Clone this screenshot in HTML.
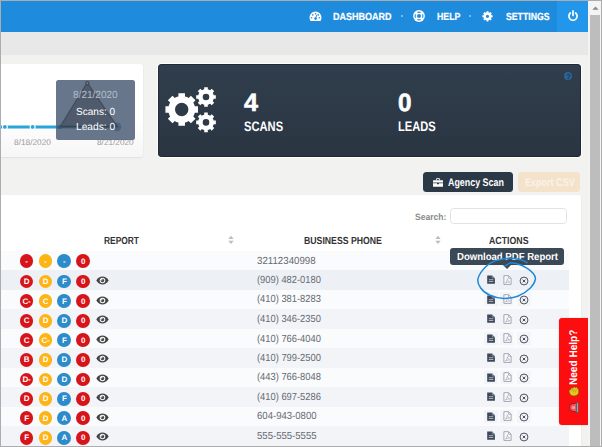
<!DOCTYPE html>
<html lang="en"><head><meta charset="utf-8"><title>Dashboard</title>
<style>
*{box-sizing:border-box}
html,body{margin:0;padding:0}
body{width:602px;height:447px;overflow:hidden;position:relative;background:#f2f2f1;font-family:"Liberation Sans", Arial, sans-serif;text-rendering:geometricPrecision}
.t{position:absolute;white-space:nowrap;line-height:1;transform-origin:0 50%;display:block}
.ic{position:absolute;overflow:visible}
.band{position:absolute;left:0;top:31px;width:590px;height:24px;background:#e8e8e8}
.nav{position:absolute;left:0;top:0;width:588px;height:31.8px;background:#1e8bdd}
.pwr{position:absolute;left:557px;top:0;width:31px;height:31.8px;background:#2296ea}
.dot{position:absolute;width:2.4px;height:2.4px;border-radius:50%;background:#8ecdf6}
.card{position:absolute;background:#fff;border-radius:3px;box-shadow:0 1px 2px rgba(0,0,0,0.08)}
.chart{position:absolute;left:-4px;top:63px;width:146.5px;height:94px}
.cbg{left:0;top:0.9px;width:146.5px;height:93px;margin-left:0 !important;background:linear-gradient(#fff 60%,#f6f6f6)}
.chart>*{margin-left:4px}
.tip1{position:absolute;left:56px;top:17px;width:79px;height:60px;border-radius:2.5px;background:rgba(74,92,116,0.84)}
.stats{position:absolute;left:158px;top:63px;width:423px;height:94px}
.sbg{position:absolute;left:0.2px;top:0.9px;width:422.8px;height:93px;border-radius:4px;background:linear-gradient(#303e4d,#2a3541);box-shadow:0 0 0 1px rgba(255,255,255,0.85), inset 0 0 0 1px rgba(25,33,42,0.6)}
.q{position:absolute;width:8.2px;height:8.2px;border-radius:50%;background:#2a649a}
.btn{position:absolute;border-radius:3.5px}
.btn.dark{background:#2b3947}
.btn.pale{background:#f5e2ca}
.tablecard{left:1px;top:195px;width:579.7px;height:260px;border-radius:0 3px 0 0}
.search{position:absolute;border:1px solid #e3e3e3;border-radius:3.5px;background:#fff}
.r{position:absolute;left:0;width:568px;height:19.6px}
.r.odd{background:#fafbfc}
.r.even{background:#f2f4f8}
.r.hov{background:#edf1f6}
.g{position:absolute;width:13.8px;height:13.8px;border-radius:50%;color:#fff;font-size:8px;line-height:1;text-align:center;font-weight:700;letter-spacing:-0.3px}
.gl{position:absolute;left:0;width:100%;display:block;line-height:1}
.ab{position:absolute;width:13.5px;height:13.8px;background:#f3f5f9}
.tip2{position:absolute;left:450px;top:248px;width:114px;height:17.2px;border-radius:3px;background:#3b4856}
.arr{position:absolute;left:53px;top:17.2px;width:0;height:0;border-left:4px solid transparent;border-right:4px solid transparent;border-top:4px solid #3b4856}
.help{position:absolute;left:558.5px;top:317.8px;width:29.5px;height:107px;background:#fb0d10;border-radius:3px 0 0 3px;box-shadow:0 0 2px rgba(0,0,0,0.2)}
.helptxt{position:absolute;left:10.1px;top:67.2px;white-space:nowrap;color:#fff;font-weight:700;font-size:11px;line-height:1;transform-origin:0 0;transform:rotate(-90deg) scaleX(0.915)}
.sb{position:absolute;left:588px;top:0;width:14px;height:447px;background:#f4f4f4}
.thumb{position:absolute;left:2.2px;top:14.8px;width:9.8px;height:440px;background:#bdbdbd}
.frame{position:absolute;left:0;top:0;width:602px;height:447px;border:1px solid #adadad;border-left-width:1.5px;border-right-width:1.5px;pointer-events:none}
</style></head>
<body>
<div class="band"></div>
<nav class="nav">
<div class="pwr"></div>
<svg class="ic" style="left:308.5px;top:11px;width:13px;height:11px" viewBox="0 0 13 11">
<path d="M6.5,0.6 A6,6 0 0 1 12.5,6.6 C12.5,7.9 12.1,9.0 11.5,9.9 L1.5,9.9 C0.9,9.0 0.5,7.9 0.5,6.6 A6,6 0 0 1 6.5,0.6Z" fill="#fff"/>
<g fill="#1e8bdd"><circle cx="2.6" cy="6.7" r="0.8"/><circle cx="3.8" cy="3.9" r="0.8"/><circle cx="6.5" cy="2.8" r="0.8"/><circle cx="9.2" cy="3.9" r="0.8"/><circle cx="10.4" cy="6.7" r="0.8"/><circle cx="6.5" cy="7.6" r="1.3"/><path d="M6.1,7.2 L7.6,3.6 L8.3,3.9 L7.0,7.6Z"/></g>
</svg>
<span class="t" id="t0" style="left:332.90px;top:13.00px;font-size:10.25px;font-weight:700;color:#fff;transform:scaleX(0.8780);-webkit-text-stroke:0.2px #fff;">DASHBOARD</span>
<i class="dot" style="left:400.5px;top:15px"></i>
<svg class="ic" style="left:412px;top:8.75px;width:14px;height:14px" viewBox="-7 -7 14 14">
<circle r="5.9" fill="#fff"/><circle r="2" fill="#1e8bdd"/>
<g fill="none" stroke="#1e8bdd" stroke-width="1.1"><path d="M3.53,-1.66 A3.9,3.9 0 0 1 3.53,1.66"/><path d="M-3.53,-1.66 A3.9,3.9 0 0 0 -3.53,1.66"/><path d="M-1.66,-3.53 A3.9,3.9 0 0 1 1.66,-3.53"/><path d="M-1.66,3.53 A3.9,3.9 0 0 0 1.66,3.53"/></g>
</svg>
<span class="t" id="t1" style="left:437.00px;top:13.00px;font-size:10.25px;font-weight:700;color:#fff;transform:scaleX(0.8521);-webkit-text-stroke:0.2px #fff;">HELP</span>
<i class="dot" style="left:469px;top:15px"></i>
<svg class="ic" style="left:481px;top:10px;width:13px;height:13px" viewBox="-6.5 -6.5 13 13"><path fill="#fff" fill-rule="evenodd" d="M3.99,-1.16 L5.11,-1.17 L5.11,0.77 L3.99,0.76 L3.86,1.17 L3.70,1.57 L3.50,1.94 L4.30,2.72 L2.92,4.10 L2.14,3.30 L1.77,3.50 L1.37,3.66 L0.96,3.79 L0.97,4.91 L-0.97,4.91 L-0.96,3.79 L-1.37,3.66 L-1.77,3.50 L-2.14,3.30 L-2.92,4.10 L-4.30,2.72 L-3.50,1.94 L-3.70,1.57 L-3.86,1.17 L-3.99,0.76 L-5.11,0.77 L-5.11,-1.17 L-3.99,-1.16 L-3.86,-1.57 L-3.70,-1.97 L-3.50,-2.34 L-4.30,-3.12 L-2.92,-4.50 L-2.14,-3.70 L-1.77,-3.90 L-1.37,-4.06 L-0.96,-4.19 L-0.97,-5.31 L0.97,-5.31 L0.96,-4.19 L1.37,-4.06 L1.77,-3.90 L2.14,-3.70 L2.92,-4.50 L4.30,-3.12 L3.50,-2.34 L3.70,-1.97 L3.86,-1.57Z M-1.60,-0.20 a1.60,1.60 0 1,0 3.20,0 a1.60,1.60 0 1,0 -3.20,0Z"/></svg>
<span class="t" id="t2" style="left:505.50px;top:13.00px;font-size:10.25px;font-weight:700;color:#fff;transform:scaleX(0.8485);-webkit-text-stroke:0.2px #fff;">SETTINGS</span>
<svg class="ic" style="left:566px;top:9px;width:14px;height:14px" viewBox="-7 -7 14 14">
<path d="M-2.6,-3.0 A4.1,4.1 0 1 0 2.6,-3.0" fill="none" stroke="#fff" stroke-width="1.7" stroke-linecap="round"/>
<path d="M0,-5.2 L0,-0.6" stroke="#fff" stroke-width="1.7" stroke-linecap="round"/>
</svg>
</nav>
<section class="chart"><div class="card cbg"></div>
<svg class="ic" style="left:0;top:0;width:143px;height:94px" viewBox="0 0 143 94">
<path d="M0,63.9 L60,63.9" stroke="#2aa5d8" stroke-width="3" fill="none"/>
<path d="M60,63.9 L117,63.9" stroke="#2a80b2" stroke-width="3" fill="none"/>
<g fill="#fff"><circle cx="4.9" cy="63.9" r="3"/><circle cx="32.6" cy="63.9" r="3"/></g>
<g fill="#2aa5d8"><circle cx="4.9" cy="63.9" r="1.9"/><circle cx="32.6" cy="63.9" r="1.9"/></g>
<circle cx="117" cy="63.9" r="4.3" fill="#3f86b8"/>
</svg>
<span class="t" id="t3" style="left:14.00px;top:76.00px;font-size:8.25px;font-weight:400;color:#999;transform:scaleX(1.0081);">8/18/2020</span>
<span class="t" id="t4" style="left:97.00px;top:76.00px;font-size:8.25px;font-weight:400;color:#999;">8/21/2020</span>
<div class="tip1"></div>
<svg class="ic" style="left:0;top:0;width:143px;height:94px" viewBox="0 0 143 94">
<path d="M60,63.9 L86.3,21 Q87.3,19.5 88.3,21 L117.5,63.9Z" fill="rgba(45,52,66,0.4)" stroke="rgba(45,52,66,0.55)" stroke-width="1.2"/>
<circle cx="87.3" cy="20.2" r="1.7" fill="#6a788b" stroke="rgba(40,48,60,0.8)" stroke-width="0.9"/>
<circle cx="60" cy="63.9" r="2" fill="rgba(45,85,120,0.9)"/>
</svg>
<span class="t" id="t5" style="left:72.80px;top:28.00px;font-size:10.25px;font-weight:400;color:#b2bdc8;transform:scaleX(0.9801);">8/21/2020</span>
<span class="t" id="t6" style="left:75.90px;top:45.00px;font-size:10.25px;font-weight:400;color:#fff;transform:scaleX(0.9802);">Scans: 0</span>
<span class="t" id="t7" style="left:75.90px;top:60.00px;font-size:10.25px;font-weight:400;color:#fff;transform:scaleX(0.9942);">Leads: 0</span>
</section>
<section class="stats"><div class="sbg"></div>
<svg class="ic" style="left:0;top:0;width:80px;height:94px" viewBox="0 0 80 94"><path fill="#fff" fill-rule="evenodd" d="M36.80,43.25 L39.97,43.21 L39.97,49.79 L36.80,49.75 L36.41,51.04 L35.90,52.28 L35.27,53.46 L37.53,55.68 L32.88,60.33 L30.66,58.07 L29.48,58.70 L28.24,59.21 L26.95,59.60 L26.99,62.77 L20.41,62.77 L20.45,59.60 L19.16,59.21 L17.92,58.70 L16.74,58.07 L14.52,60.33 L9.87,55.68 L12.13,53.46 L11.50,52.28 L10.99,51.04 L10.60,49.75 L7.43,49.79 L7.43,43.21 L10.60,43.25 L10.99,41.96 L11.50,40.72 L12.13,39.54 L9.87,37.32 L14.52,32.67 L16.74,34.93 L17.92,34.30 L19.16,33.79 L20.45,33.40 L20.41,30.23 L26.99,30.23 L26.95,33.40 L28.24,33.79 L29.48,34.30 L30.66,34.93 L32.88,32.67 L37.53,37.32 L35.27,39.54 L35.90,40.72 L36.41,41.96Z M17.00,46.50 a6.70,6.70 0 1,0 13.40,0 a6.70,6.70 0 1,0 -13.40,0Z M55.70,32.22 L57.83,32.19 L57.83,35.81 L55.70,35.78 L55.45,36.62 L55.12,37.42 L54.70,38.18 L56.24,39.67 L53.67,42.24 L52.18,40.70 L51.42,41.12 L50.62,41.45 L49.78,41.70 L49.81,43.83 L46.19,43.83 L46.22,41.70 L45.38,41.45 L44.58,41.12 L43.82,40.70 L42.33,42.24 L39.76,39.67 L41.30,38.18 L40.88,37.42 L40.55,36.62 L40.30,35.78 L38.17,35.81 L38.17,32.19 L40.30,32.22 L40.55,31.38 L40.88,30.58 L41.30,29.82 L39.76,28.33 L42.33,25.76 L43.82,27.30 L44.58,26.88 L45.38,26.55 L46.22,26.30 L46.19,24.17 L49.81,24.17 L49.78,26.30 L50.62,26.55 L51.42,26.88 L52.18,27.30 L53.67,25.76 L56.24,28.33 L54.70,29.82 L55.12,30.58 L55.45,31.38Z M44.70,34.00 a3.30,3.30 0 1,0 6.60,0 a3.30,3.30 0 1,0 -6.60,0Z M55.70,57.62 L57.83,57.59 L57.83,61.21 L55.70,61.18 L55.45,62.02 L55.12,62.82 L54.70,63.58 L56.24,65.07 L53.67,67.64 L52.18,66.10 L51.42,66.52 L50.62,66.85 L49.78,67.10 L49.81,69.23 L46.19,69.23 L46.22,67.10 L45.38,66.85 L44.58,66.52 L43.82,66.10 L42.33,67.64 L39.76,65.07 L41.30,63.58 L40.88,62.82 L40.55,62.02 L40.30,61.18 L38.17,61.21 L38.17,57.59 L40.30,57.62 L40.55,56.78 L40.88,55.98 L41.30,55.22 L39.76,53.73 L42.33,51.16 L43.82,52.70 L44.58,52.28 L45.38,51.95 L46.22,51.70 L46.19,49.57 L49.81,49.57 L49.78,51.70 L50.62,51.95 L51.42,52.28 L52.18,52.70 L53.67,51.16 L56.24,53.73 L54.70,55.22 L55.12,55.98 L55.45,56.78Z M44.70,59.40 a3.30,3.30 0 1,0 6.60,0 a3.30,3.30 0 1,0 -6.60,0Z"/></svg>
<span class="t" id="t8" style="left:85.70px;top:28.00px;font-size:25.00px;font-weight:700;color:#fff;transform:scaleX(1.0067);-webkit-text-stroke:0.6px #fff;">4</span>
<span class="t" id="t9" style="left:85.70px;top:57.00px;font-size:13.75px;font-weight:700;color:#fff;transform:scaleX(0.8122);">SCANS</span>
<span class="t" id="t10" style="left:239.50px;top:28.00px;font-size:25.00px;font-weight:700;color:#fff;transform:scaleX(0.9708);-webkit-text-stroke:0.6px #fff;">0</span>
<span class="t" id="t11" style="left:239.50px;top:57.00px;font-size:13.75px;font-weight:700;color:#fff;transform:scaleX(0.8110);">LEADS</span>
<span class="q" style="left:405.8px;top:8.8px"></span>
<span class="t" id="t12" style="left:408.30px;top:10.00px;font-size:7.50px;font-weight:700;color:#2a3541;">?</span>
</section>
<div class="btn dark" style="left:422.8px;top:171.5px;width:90.5px;height:20.8px">
<svg class="ic" style="left:10px;top:6px;width:10px;height:9px" viewBox="0 0 10 9">
<path d="M0.4,2.2 h9.2 a0.4,0.4 0 0 1 0.4,0.4 v2.0 h-10 v-2.0 a0.4,0.4 0 0 1 0.4,-0.4Z M0,5.3 h4 v0.9 h2 v-0.9 h4 v2.9 a0.5,0.5 0 0 1 -0.5,0.5 h-9 a0.5,0.5 0 0 1 -0.5,-0.5Z" fill="#fff"/>
<path d="M3.4,2.2 v-1.2 a0.4,0.4 0 0 1 0.4,-0.4 h2.4 a0.4,0.4 0 0 1 0.4,0.4 v1.2" fill="none" stroke="#fff" stroke-width="0.9"/>
</svg>
<span class="t" id="t13" style="left:25.00px;top:6.50px;font-size:11.00px;font-weight:700;color:#fff;transform:scaleX(0.8090);">Agency Scan</span>
</div>
<div class="btn pale" style="left:517.6px;top:171.5px;width:62.7px;height:20.8px">
<span class="t" id="t14" style="left:7.00px;top:6.50px;font-size:11.00px;font-weight:700;color:#f9f2ea;transform:scaleX(0.8213);">Export CSV</span>
</div>
<section class="card tablecard">
<span class="t" id="t15" style="left:413.80px;top:18.00px;font-size:9.25px;font-weight:700;color:#8a8a8a;transform:scaleX(0.9223);">Search:</span>
<div class="search" style="left:449.4px;top:12.5px;width:116.6px;height:16.9px"></div>
<span class="t" id="t16" style="left:103.00px;top:42.00px;font-size:10.25px;font-weight:700;color:#333;transform:scaleX(0.8193);">REPORT</span>
<span class="t" id="t17" style="left:303.40px;top:42.00px;font-size:10.25px;font-weight:700;color:#333;transform:scaleX(0.8495);">BUSINESS PHONE</span>
<span class="t" id="t18" style="left:488.00px;top:42.00px;font-size:10.25px;font-weight:700;color:#333;transform:scaleX(0.8564);">ACTIONS</span>
<svg class="ic" style="left:226.5px;top:40.0px;width:6px;height:10px" viewBox="0 0 6 10"><path d="M0.3,4.1 L3,0.8 L5.7,4.1Z M0.3,5.7 L3,9 L5.7,5.7Z" fill="#bdbdbd"/></svg>
<svg class="ic" style="left:433.8px;top:40.0px;width:6px;height:10px" viewBox="0 0 6 10"><path d="M0.3,4.1 L3,0.8 L5.7,4.1Z M0.3,5.7 L3,9 L5.7,5.7Z" fill="#bdbdbd"/></svg>
<div class="r odd" style="top:55.70px"></div>
<b class="g" style="left:18.60px;top:59.30px;background:#d7141a"><span class="gl" style="top:3.70px">-</span></b>
<b class="g" style="left:37.50px;top:59.30px;background:#fdb414"><span class="gl" style="top:3.70px">-</span></b>
<b class="g" style="left:56.30px;top:59.30px;background:#2b8bcb"><span class="gl" style="top:3.70px">-</span></b>
<b class="g" style="left:75.10px;top:59.30px;background:#d7141a"><span class="gl" style="top:3.70px">0</span></b>
<span class="t" id="t19" style="left:256.40px;top:62.00px;font-size:10.25px;font-weight:400;color:#666a72;transform:scaleX(0.9459);">32112340998</span>
<i class="ab" style="left:483.1px;top:57.5px"></i>
<i class="ab" style="left:498.9px;top:57.5px"></i>
<i class="ab" style="left:516.0px;top:57.5px"></i>
<svg class="ic" style="left:486.0px;top:59.7px;width:8px;height:9px" viewBox="0 0 8 9"><path d="M0.2,0.4 H5 L7.9,3.3 V8.7 H0.2Z" fill="#3d4858"/><path d="M5.3,0.2 V3 H8" stroke="#aab2bc" stroke-width="0.6" fill="none"/><path d="M1.8,4.7 H6.3 M1.8,6.5 H6.3" stroke="#c5ccd5" stroke-width="0.8"/></svg>
<svg class="ic" style="left:501.7px;top:59.2px;width:9px;height:10px" viewBox="0 0 9 10"><path d="M0.9,0.7 H5.6 L8.1,3.2 V9.4 H0.9Z" fill="#fbfbfd" stroke="#959eaa" stroke-width="0.9"/><path d="M5.5,0.9 V3.3 H8" stroke="#959eaa" stroke-width="0.7" fill="none"/><path d="M2.4,8 C3.6,6.9 4.3,5.3 4.3,3.7 C4.5,5.5 5.4,6.7 6.8,7 C5.2,6.9 3.6,7.3 2.4,8Z" fill="none" stroke="#a9a2b0" stroke-width="0.65"/></svg>
<svg class="ic" style="left:518.3px;top:60.2px;width:10px;height:10px" viewBox="-5 -5 10 10"><circle r="3.95" fill="none" stroke="#3e3e4c" stroke-width="0.9"/><path d="M-1.35,-1.35 L1.35,1.35 M-1.35,1.35 L1.35,-1.35" stroke="#3e3e4c" stroke-width="0.9"/></svg>
<div class="r hov" style="top:75.23px"></div>
<b class="g" style="left:18.60px;top:79.60px;background:#d7141a"><span class="gl" style="top:3.40px">D</span></b>
<b class="g" style="left:37.50px;top:79.60px;background:#fdb414"><span class="gl" style="top:3.40px">D</span></b>
<b class="g" style="left:56.30px;top:79.60px;background:#2b8bcb"><span class="gl" style="top:3.40px">F</span></b>
<b class="g" style="left:75.10px;top:79.60px;background:#d7141a"><span class="gl" style="top:3.40px">0</span></b>
<svg class="ic" style="left:94.8px;top:81.1px;width:13px;height:9px" viewBox="0 0 13 9"><path d="M0.3,4.5 C2,1.7 4,0.6 6.5,0.6 C9,0.6 11,1.7 12.7,4.5 C11,7.3 9,8.4 6.5,8.4 C4,8.4 2,7.3 0.3,4.5Z M6.5,1.7 A2.8,2.8 0 1 0 6.5,7.3 A2.8,2.8 0 1 0 6.5,1.7Z" fill="#444" fill-rule="evenodd"/><circle cx="6.5" cy="4.5" r="1.7" fill="#444"/><circle cx="5.8" cy="3.8" r="0.7" fill="#fff"/></svg>
<span class="t" id="t20" style="left:256.40px;top:81.00px;font-size:10.25px;font-weight:400;color:#666a72;transform:scaleX(0.9116);">(909) 482-0180</span>
<svg class="ic" style="left:486.0px;top:80.0px;width:8px;height:9px" viewBox="0 0 8 9"><path d="M0.2,0.4 H5 L7.9,3.3 V8.7 H0.2Z" fill="#3d4858"/><path d="M5.3,0.2 V3 H8" stroke="#aab2bc" stroke-width="0.6" fill="none"/><path d="M1.8,4.7 H6.3 M1.8,6.5 H6.3" stroke="#c5ccd5" stroke-width="0.8"/></svg>
<svg class="ic" style="left:501.7px;top:79.5px;width:9px;height:10px" viewBox="0 0 9 10"><path d="M0.9,0.7 H5.6 L8.1,3.2 V9.4 H0.9Z" fill="#fbfbfd" stroke="#959eaa" stroke-width="0.9"/><path d="M5.5,0.9 V3.3 H8" stroke="#959eaa" stroke-width="0.7" fill="none"/><path d="M2.4,8 C3.6,6.9 4.3,5.3 4.3,3.7 C4.5,5.5 5.4,6.7 6.8,7 C5.2,6.9 3.6,7.3 2.4,8Z" fill="none" stroke="#a9a2b0" stroke-width="0.65"/></svg>
<svg class="ic" style="left:518.3px;top:80.5px;width:10px;height:10px" viewBox="-5 -5 10 10"><circle r="3.95" fill="none" stroke="#3e3e4c" stroke-width="0.9"/><path d="M-1.35,-1.35 L1.35,1.35 M-1.35,1.35 L1.35,-1.35" stroke="#3e3e4c" stroke-width="0.9"/></svg>
<div class="r odd" style="top:94.76px"></div>
<b class="g" style="left:18.60px;top:99.20px;background:#d7141a"><span class="gl" style="top:3.80px">C-</span></b>
<b class="g" style="left:37.50px;top:99.20px;background:#fdb414"><span class="gl" style="top:3.80px">C</span></b>
<b class="g" style="left:56.30px;top:99.20px;background:#2b8bcb"><span class="gl" style="top:3.80px">F</span></b>
<b class="g" style="left:75.10px;top:99.20px;background:#d7141a"><span class="gl" style="top:3.80px">0</span></b>
<svg class="ic" style="left:94.8px;top:100.7px;width:13px;height:9px" viewBox="0 0 13 9"><path d="M0.3,4.5 C2,1.7 4,0.6 6.5,0.6 C9,0.6 11,1.7 12.7,4.5 C11,7.3 9,8.4 6.5,8.4 C4,8.4 2,7.3 0.3,4.5Z M6.5,1.7 A2.8,2.8 0 1 0 6.5,7.3 A2.8,2.8 0 1 0 6.5,1.7Z" fill="#444" fill-rule="evenodd"/><circle cx="6.5" cy="4.5" r="1.7" fill="#444"/><circle cx="5.8" cy="3.8" r="0.7" fill="#fff"/></svg>
<span class="t" id="t21" style="left:256.40px;top:100.00px;font-size:10.25px;font-weight:400;color:#666a72;transform:scaleX(0.9116);">(410) 381-8283</span>
<i class="ab" style="left:483.1px;top:97.4px"></i>
<i class="ab" style="left:498.9px;top:97.4px"></i>
<i class="ab" style="left:516.0px;top:97.4px"></i>
<svg class="ic" style="left:486.0px;top:99.6px;width:8px;height:9px" viewBox="0 0 8 9"><path d="M0.2,0.4 H5 L7.9,3.3 V8.7 H0.2Z" fill="#3d4858"/><path d="M5.3,0.2 V3 H8" stroke="#aab2bc" stroke-width="0.6" fill="none"/><path d="M1.8,4.7 H6.3 M1.8,6.5 H6.3" stroke="#c5ccd5" stroke-width="0.8"/></svg>
<svg class="ic" style="left:501.7px;top:99.1px;width:9px;height:10px" viewBox="0 0 9 10"><path d="M0.9,0.7 H5.6 L8.1,3.2 V9.4 H0.9Z" fill="#fbfbfd" stroke="#959eaa" stroke-width="0.9"/><path d="M5.5,0.9 V3.3 H8" stroke="#959eaa" stroke-width="0.7" fill="none"/><path d="M2.4,8 C3.6,6.9 4.3,5.3 4.3,3.7 C4.5,5.5 5.4,6.7 6.8,7 C5.2,6.9 3.6,7.3 2.4,8Z" fill="none" stroke="#a9a2b0" stroke-width="0.65"/></svg>
<svg class="ic" style="left:518.3px;top:100.1px;width:10px;height:10px" viewBox="-5 -5 10 10"><circle r="3.95" fill="none" stroke="#3e3e4c" stroke-width="0.9"/><path d="M-1.35,-1.35 L1.35,1.35 M-1.35,1.35 L1.35,-1.35" stroke="#3e3e4c" stroke-width="0.9"/></svg>
<div class="r even" style="top:114.29px"></div>
<b class="g" style="left:18.60px;top:118.80px;background:#d7141a"><span class="gl" style="top:3.20px">C</span></b>
<b class="g" style="left:37.50px;top:118.80px;background:#fdb414"><span class="gl" style="top:3.20px">D</span></b>
<b class="g" style="left:56.30px;top:118.80px;background:#2b8bcb"><span class="gl" style="top:3.20px">D</span></b>
<b class="g" style="left:75.10px;top:118.80px;background:#d7141a"><span class="gl" style="top:3.20px">0</span></b>
<svg class="ic" style="left:94.8px;top:120.3px;width:13px;height:9px" viewBox="0 0 13 9"><path d="M0.3,4.5 C2,1.7 4,0.6 6.5,0.6 C9,0.6 11,1.7 12.7,4.5 C11,7.3 9,8.4 6.5,8.4 C4,8.4 2,7.3 0.3,4.5Z M6.5,1.7 A2.8,2.8 0 1 0 6.5,7.3 A2.8,2.8 0 1 0 6.5,1.7Z" fill="#444" fill-rule="evenodd"/><circle cx="6.5" cy="4.5" r="1.7" fill="#444"/><circle cx="5.8" cy="3.8" r="0.7" fill="#fff"/></svg>
<span class="t" id="t22" style="left:256.40px;top:120.00px;font-size:10.25px;font-weight:400;color:#666a72;transform:scaleX(0.9116);">(410) 346-2350</span>
<svg class="ic" style="left:486.0px;top:119.2px;width:8px;height:9px" viewBox="0 0 8 9"><path d="M0.2,0.4 H5 L7.9,3.3 V8.7 H0.2Z" fill="#3d4858"/><path d="M5.3,0.2 V3 H8" stroke="#aab2bc" stroke-width="0.6" fill="none"/><path d="M1.8,4.7 H6.3 M1.8,6.5 H6.3" stroke="#c5ccd5" stroke-width="0.8"/></svg>
<svg class="ic" style="left:501.7px;top:118.7px;width:9px;height:10px" viewBox="0 0 9 10"><path d="M0.9,0.7 H5.6 L8.1,3.2 V9.4 H0.9Z" fill="#fbfbfd" stroke="#959eaa" stroke-width="0.9"/><path d="M5.5,0.9 V3.3 H8" stroke="#959eaa" stroke-width="0.7" fill="none"/><path d="M2.4,8 C3.6,6.9 4.3,5.3 4.3,3.7 C4.5,5.5 5.4,6.7 6.8,7 C5.2,6.9 3.6,7.3 2.4,8Z" fill="none" stroke="#a9a2b0" stroke-width="0.65"/></svg>
<svg class="ic" style="left:518.3px;top:119.7px;width:10px;height:10px" viewBox="-5 -5 10 10"><circle r="3.95" fill="none" stroke="#3e3e4c" stroke-width="0.9"/><path d="M-1.35,-1.35 L1.35,1.35 M-1.35,1.35 L1.35,-1.35" stroke="#3e3e4c" stroke-width="0.9"/></svg>
<div class="r odd" style="top:133.82px"></div>
<b class="g" style="left:18.60px;top:138.30px;background:#d7141a"><span class="gl" style="top:3.70px">C</span></b>
<b class="g" style="left:37.50px;top:138.30px;background:#fdb414"><span class="gl" style="top:3.70px">C-</span></b>
<b class="g" style="left:56.30px;top:138.30px;background:#2b8bcb"><span class="gl" style="top:3.70px">F</span></b>
<b class="g" style="left:75.10px;top:138.30px;background:#d7141a"><span class="gl" style="top:3.70px">0</span></b>
<svg class="ic" style="left:94.8px;top:139.8px;width:13px;height:9px" viewBox="0 0 13 9"><path d="M0.3,4.5 C2,1.7 4,0.6 6.5,0.6 C9,0.6 11,1.7 12.7,4.5 C11,7.3 9,8.4 6.5,8.4 C4,8.4 2,7.3 0.3,4.5Z M6.5,1.7 A2.8,2.8 0 1 0 6.5,7.3 A2.8,2.8 0 1 0 6.5,1.7Z" fill="#444" fill-rule="evenodd"/><circle cx="6.5" cy="4.5" r="1.7" fill="#444"/><circle cx="5.8" cy="3.8" r="0.7" fill="#fff"/></svg>
<span class="t" id="t23" style="left:256.40px;top:140.00px;font-size:10.25px;font-weight:400;color:#666a72;transform:scaleX(0.9116);">(410) 766-4040</span>
<i class="ab" style="left:483.1px;top:136.5px"></i>
<i class="ab" style="left:498.9px;top:136.5px"></i>
<i class="ab" style="left:516.0px;top:136.5px"></i>
<svg class="ic" style="left:486.0px;top:138.7px;width:8px;height:9px" viewBox="0 0 8 9"><path d="M0.2,0.4 H5 L7.9,3.3 V8.7 H0.2Z" fill="#3d4858"/><path d="M5.3,0.2 V3 H8" stroke="#aab2bc" stroke-width="0.6" fill="none"/><path d="M1.8,4.7 H6.3 M1.8,6.5 H6.3" stroke="#c5ccd5" stroke-width="0.8"/></svg>
<svg class="ic" style="left:501.7px;top:138.2px;width:9px;height:10px" viewBox="0 0 9 10"><path d="M0.9,0.7 H5.6 L8.1,3.2 V9.4 H0.9Z" fill="#fbfbfd" stroke="#959eaa" stroke-width="0.9"/><path d="M5.5,0.9 V3.3 H8" stroke="#959eaa" stroke-width="0.7" fill="none"/><path d="M2.4,8 C3.6,6.9 4.3,5.3 4.3,3.7 C4.5,5.5 5.4,6.7 6.8,7 C5.2,6.9 3.6,7.3 2.4,8Z" fill="none" stroke="#a9a2b0" stroke-width="0.65"/></svg>
<svg class="ic" style="left:518.3px;top:139.2px;width:10px;height:10px" viewBox="-5 -5 10 10"><circle r="3.95" fill="none" stroke="#3e3e4c" stroke-width="0.9"/><path d="M-1.35,-1.35 L1.35,1.35 M-1.35,1.35 L1.35,-1.35" stroke="#3e3e4c" stroke-width="0.9"/></svg>
<div class="r even" style="top:153.35px"></div>
<b class="g" style="left:18.60px;top:157.80px;background:#d7141a"><span class="gl" style="top:3.20px">B</span></b>
<b class="g" style="left:37.50px;top:157.80px;background:#fdb414"><span class="gl" style="top:3.20px">D</span></b>
<b class="g" style="left:56.30px;top:157.80px;background:#2b8bcb"><span class="gl" style="top:3.20px">D</span></b>
<b class="g" style="left:75.10px;top:157.80px;background:#d7141a"><span class="gl" style="top:3.20px">0</span></b>
<svg class="ic" style="left:94.8px;top:159.3px;width:13px;height:9px" viewBox="0 0 13 9"><path d="M0.3,4.5 C2,1.7 4,0.6 6.5,0.6 C9,0.6 11,1.7 12.7,4.5 C11,7.3 9,8.4 6.5,8.4 C4,8.4 2,7.3 0.3,4.5Z M6.5,1.7 A2.8,2.8 0 1 0 6.5,7.3 A2.8,2.8 0 1 0 6.5,1.7Z" fill="#444" fill-rule="evenodd"/><circle cx="6.5" cy="4.5" r="1.7" fill="#444"/><circle cx="5.8" cy="3.8" r="0.7" fill="#fff"/></svg>
<span class="t" id="t24" style="left:256.40px;top:159.00px;font-size:10.25px;font-weight:400;color:#666a72;transform:scaleX(0.9116);">(410) 799-2500</span>
<svg class="ic" style="left:486.0px;top:158.2px;width:8px;height:9px" viewBox="0 0 8 9"><path d="M0.2,0.4 H5 L7.9,3.3 V8.7 H0.2Z" fill="#3d4858"/><path d="M5.3,0.2 V3 H8" stroke="#aab2bc" stroke-width="0.6" fill="none"/><path d="M1.8,4.7 H6.3 M1.8,6.5 H6.3" stroke="#c5ccd5" stroke-width="0.8"/></svg>
<svg class="ic" style="left:501.7px;top:157.7px;width:9px;height:10px" viewBox="0 0 9 10"><path d="M0.9,0.7 H5.6 L8.1,3.2 V9.4 H0.9Z" fill="#fbfbfd" stroke="#959eaa" stroke-width="0.9"/><path d="M5.5,0.9 V3.3 H8" stroke="#959eaa" stroke-width="0.7" fill="none"/><path d="M2.4,8 C3.6,6.9 4.3,5.3 4.3,3.7 C4.5,5.5 5.4,6.7 6.8,7 C5.2,6.9 3.6,7.3 2.4,8Z" fill="none" stroke="#a9a2b0" stroke-width="0.65"/></svg>
<svg class="ic" style="left:518.3px;top:158.7px;width:10px;height:10px" viewBox="-5 -5 10 10"><circle r="3.95" fill="none" stroke="#3e3e4c" stroke-width="0.9"/><path d="M-1.35,-1.35 L1.35,1.35 M-1.35,1.35 L1.35,-1.35" stroke="#3e3e4c" stroke-width="0.9"/></svg>
<div class="r odd" style="top:172.88px"></div>
<b class="g" style="left:18.60px;top:177.50px;background:#d7141a"><span class="gl" style="top:3.50px">D-</span></b>
<b class="g" style="left:37.50px;top:177.50px;background:#fdb414"><span class="gl" style="top:3.50px">D</span></b>
<b class="g" style="left:56.30px;top:177.50px;background:#2b8bcb"><span class="gl" style="top:3.50px">D</span></b>
<b class="g" style="left:75.10px;top:177.50px;background:#d7141a"><span class="gl" style="top:3.50px">0</span></b>
<svg class="ic" style="left:94.8px;top:179.0px;width:13px;height:9px" viewBox="0 0 13 9"><path d="M0.3,4.5 C2,1.7 4,0.6 6.5,0.6 C9,0.6 11,1.7 12.7,4.5 C11,7.3 9,8.4 6.5,8.4 C4,8.4 2,7.3 0.3,4.5Z M6.5,1.7 A2.8,2.8 0 1 0 6.5,7.3 A2.8,2.8 0 1 0 6.5,1.7Z" fill="#444" fill-rule="evenodd"/><circle cx="6.5" cy="4.5" r="1.7" fill="#444"/><circle cx="5.8" cy="3.8" r="0.7" fill="#fff"/></svg>
<span class="t" id="t25" style="left:256.40px;top:178.00px;font-size:10.25px;font-weight:400;color:#666a72;transform:scaleX(0.9116);">(443) 766-8048</span>
<i class="ab" style="left:483.1px;top:175.7px"></i>
<i class="ab" style="left:498.9px;top:175.7px"></i>
<i class="ab" style="left:516.0px;top:175.7px"></i>
<svg class="ic" style="left:486.0px;top:177.9px;width:8px;height:9px" viewBox="0 0 8 9"><path d="M0.2,0.4 H5 L7.9,3.3 V8.7 H0.2Z" fill="#3d4858"/><path d="M5.3,0.2 V3 H8" stroke="#aab2bc" stroke-width="0.6" fill="none"/><path d="M1.8,4.7 H6.3 M1.8,6.5 H6.3" stroke="#c5ccd5" stroke-width="0.8"/></svg>
<svg class="ic" style="left:501.7px;top:177.4px;width:9px;height:10px" viewBox="0 0 9 10"><path d="M0.9,0.7 H5.6 L8.1,3.2 V9.4 H0.9Z" fill="#fbfbfd" stroke="#959eaa" stroke-width="0.9"/><path d="M5.5,0.9 V3.3 H8" stroke="#959eaa" stroke-width="0.7" fill="none"/><path d="M2.4,8 C3.6,6.9 4.3,5.3 4.3,3.7 C4.5,5.5 5.4,6.7 6.8,7 C5.2,6.9 3.6,7.3 2.4,8Z" fill="none" stroke="#a9a2b0" stroke-width="0.65"/></svg>
<svg class="ic" style="left:518.3px;top:178.4px;width:10px;height:10px" viewBox="-5 -5 10 10"><circle r="3.95" fill="none" stroke="#3e3e4c" stroke-width="0.9"/><path d="M-1.35,-1.35 L1.35,1.35 M-1.35,1.35 L1.35,-1.35" stroke="#3e3e4c" stroke-width="0.9"/></svg>
<div class="r even" style="top:192.41px"></div>
<b class="g" style="left:18.60px;top:196.90px;background:#d7141a"><span class="gl" style="top:3.10px">D</span></b>
<b class="g" style="left:37.50px;top:196.90px;background:#fdb414"><span class="gl" style="top:3.10px">D</span></b>
<b class="g" style="left:56.30px;top:196.90px;background:#2b8bcb"><span class="gl" style="top:3.10px">F</span></b>
<b class="g" style="left:75.10px;top:196.90px;background:#d7141a"><span class="gl" style="top:3.10px">0</span></b>
<svg class="ic" style="left:94.8px;top:198.4px;width:13px;height:9px" viewBox="0 0 13 9"><path d="M0.3,4.5 C2,1.7 4,0.6 6.5,0.6 C9,0.6 11,1.7 12.7,4.5 C11,7.3 9,8.4 6.5,8.4 C4,8.4 2,7.3 0.3,4.5Z M6.5,1.7 A2.8,2.8 0 1 0 6.5,7.3 A2.8,2.8 0 1 0 6.5,1.7Z" fill="#444" fill-rule="evenodd"/><circle cx="6.5" cy="4.5" r="1.7" fill="#444"/><circle cx="5.8" cy="3.8" r="0.7" fill="#fff"/></svg>
<span class="t" id="t26" style="left:256.40px;top:198.00px;font-size:10.25px;font-weight:400;color:#666a72;transform:scaleX(0.9116);">(410) 697-5286</span>
<svg class="ic" style="left:486.0px;top:197.3px;width:8px;height:9px" viewBox="0 0 8 9"><path d="M0.2,0.4 H5 L7.9,3.3 V8.7 H0.2Z" fill="#3d4858"/><path d="M5.3,0.2 V3 H8" stroke="#aab2bc" stroke-width="0.6" fill="none"/><path d="M1.8,4.7 H6.3 M1.8,6.5 H6.3" stroke="#c5ccd5" stroke-width="0.8"/></svg>
<svg class="ic" style="left:501.7px;top:196.8px;width:9px;height:10px" viewBox="0 0 9 10"><path d="M0.9,0.7 H5.6 L8.1,3.2 V9.4 H0.9Z" fill="#fbfbfd" stroke="#959eaa" stroke-width="0.9"/><path d="M5.5,0.9 V3.3 H8" stroke="#959eaa" stroke-width="0.7" fill="none"/><path d="M2.4,8 C3.6,6.9 4.3,5.3 4.3,3.7 C4.5,5.5 5.4,6.7 6.8,7 C5.2,6.9 3.6,7.3 2.4,8Z" fill="none" stroke="#a9a2b0" stroke-width="0.65"/></svg>
<svg class="ic" style="left:518.3px;top:197.8px;width:10px;height:10px" viewBox="-5 -5 10 10"><circle r="3.95" fill="none" stroke="#3e3e4c" stroke-width="0.9"/><path d="M-1.35,-1.35 L1.35,1.35 M-1.35,1.35 L1.35,-1.35" stroke="#3e3e4c" stroke-width="0.9"/></svg>
<div class="r odd" style="top:211.94px"></div>
<b class="g" style="left:18.60px;top:216.40px;background:#d7141a"><span class="gl" style="top:3.60px">F</span></b>
<b class="g" style="left:37.50px;top:216.40px;background:#fdb414"><span class="gl" style="top:3.60px">D</span></b>
<b class="g" style="left:56.30px;top:216.40px;background:#2b8bcb"><span class="gl" style="top:3.60px">A</span></b>
<b class="g" style="left:75.10px;top:216.40px;background:#d7141a"><span class="gl" style="top:3.60px">0</span></b>
<svg class="ic" style="left:94.8px;top:217.9px;width:13px;height:9px" viewBox="0 0 13 9"><path d="M0.3,4.5 C2,1.7 4,0.6 6.5,0.6 C9,0.6 11,1.7 12.7,4.5 C11,7.3 9,8.4 6.5,8.4 C4,8.4 2,7.3 0.3,4.5Z M6.5,1.7 A2.8,2.8 0 1 0 6.5,7.3 A2.8,2.8 0 1 0 6.5,1.7Z" fill="#444" fill-rule="evenodd"/><circle cx="6.5" cy="4.5" r="1.7" fill="#444"/><circle cx="5.8" cy="3.8" r="0.7" fill="#fff"/></svg>
<span class="t" id="t27" style="left:256.40px;top:217.00px;font-size:10.25px;font-weight:400;color:#666a72;transform:scaleX(0.9335);">604-943-0800</span>
<i class="ab" style="left:483.1px;top:214.6px"></i>
<i class="ab" style="left:498.9px;top:214.6px"></i>
<i class="ab" style="left:516.0px;top:214.6px"></i>
<svg class="ic" style="left:486.0px;top:216.8px;width:8px;height:9px" viewBox="0 0 8 9"><path d="M0.2,0.4 H5 L7.9,3.3 V8.7 H0.2Z" fill="#3d4858"/><path d="M5.3,0.2 V3 H8" stroke="#aab2bc" stroke-width="0.6" fill="none"/><path d="M1.8,4.7 H6.3 M1.8,6.5 H6.3" stroke="#c5ccd5" stroke-width="0.8"/></svg>
<svg class="ic" style="left:501.7px;top:216.3px;width:9px;height:10px" viewBox="0 0 9 10"><path d="M0.9,0.7 H5.6 L8.1,3.2 V9.4 H0.9Z" fill="#fbfbfd" stroke="#959eaa" stroke-width="0.9"/><path d="M5.5,0.9 V3.3 H8" stroke="#959eaa" stroke-width="0.7" fill="none"/><path d="M2.4,8 C3.6,6.9 4.3,5.3 4.3,3.7 C4.5,5.5 5.4,6.7 6.8,7 C5.2,6.9 3.6,7.3 2.4,8Z" fill="none" stroke="#a9a2b0" stroke-width="0.65"/></svg>
<svg class="ic" style="left:518.3px;top:217.3px;width:10px;height:10px" viewBox="-5 -5 10 10"><circle r="3.95" fill="none" stroke="#3e3e4c" stroke-width="0.9"/><path d="M-1.35,-1.35 L1.35,1.35 M-1.35,1.35 L1.35,-1.35" stroke="#3e3e4c" stroke-width="0.9"/></svg>
<div class="r even" style="top:231.47px"></div>
<b class="g" style="left:18.60px;top:235.90px;background:#d7141a"><span class="gl" style="top:3.10px">F</span></b>
<b class="g" style="left:37.50px;top:235.90px;background:#fdb414"><span class="gl" style="top:3.10px">D</span></b>
<b class="g" style="left:56.30px;top:235.90px;background:#2b8bcb"><span class="gl" style="top:3.10px">A</span></b>
<b class="g" style="left:75.10px;top:235.90px;background:#d7141a"><span class="gl" style="top:3.10px">0</span></b>
<svg class="ic" style="left:94.8px;top:237.4px;width:13px;height:9px" viewBox="0 0 13 9"><path d="M0.3,4.5 C2,1.7 4,0.6 6.5,0.6 C9,0.6 11,1.7 12.7,4.5 C11,7.3 9,8.4 6.5,8.4 C4,8.4 2,7.3 0.3,4.5Z M6.5,1.7 A2.8,2.8 0 1 0 6.5,7.3 A2.8,2.8 0 1 0 6.5,1.7Z" fill="#444" fill-rule="evenodd"/><circle cx="6.5" cy="4.5" r="1.7" fill="#444"/><circle cx="5.8" cy="3.8" r="0.7" fill="#fff"/></svg>
<span class="t" id="t28" style="left:256.40px;top:237.00px;font-size:10.25px;font-weight:400;color:#666a72;transform:scaleX(0.9335);">555-555-5555</span>
<svg class="ic" style="left:486.0px;top:236.3px;width:8px;height:9px" viewBox="0 0 8 9"><path d="M0.2,0.4 H5 L7.9,3.3 V8.7 H0.2Z" fill="#3d4858"/><path d="M5.3,0.2 V3 H8" stroke="#aab2bc" stroke-width="0.6" fill="none"/><path d="M1.8,4.7 H6.3 M1.8,6.5 H6.3" stroke="#c5ccd5" stroke-width="0.8"/></svg>
<svg class="ic" style="left:501.7px;top:235.8px;width:9px;height:10px" viewBox="0 0 9 10"><path d="M0.9,0.7 H5.6 L8.1,3.2 V9.4 H0.9Z" fill="#fbfbfd" stroke="#959eaa" stroke-width="0.9"/><path d="M5.5,0.9 V3.3 H8" stroke="#959eaa" stroke-width="0.7" fill="none"/><path d="M2.4,8 C3.6,6.9 4.3,5.3 4.3,3.7 C4.5,5.5 5.4,6.7 6.8,7 C5.2,6.9 3.6,7.3 2.4,8Z" fill="none" stroke="#a9a2b0" stroke-width="0.65"/></svg>
<svg class="ic" style="left:518.3px;top:236.8px;width:10px;height:10px" viewBox="-5 -5 10 10"><circle r="3.95" fill="none" stroke="#3e3e4c" stroke-width="0.9"/><path d="M-1.35,-1.35 L1.35,1.35 M-1.35,1.35 L1.35,-1.35" stroke="#3e3e4c" stroke-width="0.9"/></svg>
</section>
<div class="tip2"><span class="t" id="t29" style="left:7.00px;top:5.00px;font-size:10.25px;font-weight:700;color:#fff;transform:scaleX(0.9334);">Download PDF Report</span><i class="arr"></i></div>
<svg class="ic" style="left:470px;top:250px;width:75px;height:56px" viewBox="470 250 75 56">
<path d="M527.0,262.7 C526.0,262.2 523.8,260.6 521.0,259.8 C518.2,259.1 514.3,258.1 510.3,258.2 C506.3,258.3 500.9,259.0 496.8,260.4 C492.8,261.8 489.1,263.5 486.0,266.5 C482.9,269.5 478.9,275.0 478.0,278.6 C477.1,282.2 478.7,285.2 480.7,288.0 C482.7,290.8 486.2,293.6 490.0,295.3 C493.8,297.0 498.8,298.3 503.5,298.4 C508.2,298.5 513.8,297.7 518.3,296.0 C522.8,294.3 527.5,290.8 530.4,288.0 C533.2,285.2 535.0,281.7 535.4,279.2 C535.8,276.7 534.5,275.1 533.0,273.2 C531.5,271.3 529.1,269.4 526.4,267.8 C523.7,266.2 519.7,264.6 517.0,263.8 C514.3,263.0 512.3,262.8 510.3,263.1 C508.3,263.4 506.1,265.4 505.2,265.8" fill="none" stroke="#2089d8" stroke-width="1.5" stroke-linecap="round"/>
</svg>
<div class="help">
<span class="helptxt" id="helptxt">Need Help?</span>
<svg class="ic" style="left:9.4px;top:68.3px;width:12px;height:11px" viewBox="0 0 12 11">
<path d="M1.2,6.2 C0.6,4.6 1.4,3.4 2.6,3.6 L3.2,2.2 C3.6,1.3 4.6,1.4 4.8,2.2 L5.4,1.2 C5.9,0.4 7,0.6 7.1,1.5 L7.9,1 C8.8,0.6 9.5,1.4 9.2,2.2 C10.4,2.4 10.9,3.4 10.6,4.6 C11.2,6.2 10.6,8 9.2,9 C7.6,10.2 5.2,10.4 3.6,9.6 C2.4,9 1.6,7.6 1.2,6.2Z" fill="#e9c41f" stroke="#6b5410" stroke-width="0.7"/>
<path d="M3.4,5.2 L5,3 M5.2,6 L6.9,3 M7,6.6 L8.6,3.6" stroke="#b08f14" stroke-width="0.6" fill="none"/>
</svg>
<svg class="ic" style="left:10px;top:83.8px;width:10px;height:11px" viewBox="0 0 10 11">
<path d="M7.6,0.9 L7.6,10.1 L3.2,9.2 C1.4,8.6 0.6,7 0.6,5.5 C0.6,4 1.4,2.4 3.2,1.8Z" fill="#f0565f" stroke="#5a1a20" stroke-width="0.7"/>
<path d="M7.6,0.6 H9.2 V10.4 H7.6Z" fill="#b9c1c9" stroke="#4a4f58" stroke-width="0.6"/>
<circle cx="4.6" cy="5.5" r="1.6" fill="#f9a0a0"/>
</svg>
</div>
<div class="sb"><svg class="ic" style="left:3.5px;top:6px;width:7px;height:4px" viewBox="0 0 7 4"><path d="M0.3,3.8 L3.5,0.5 L6.7,3.8Z" fill="#8a8a8a"/></svg><div class="thumb"></div></div>
<div class="frame"></div>
</body></html>
